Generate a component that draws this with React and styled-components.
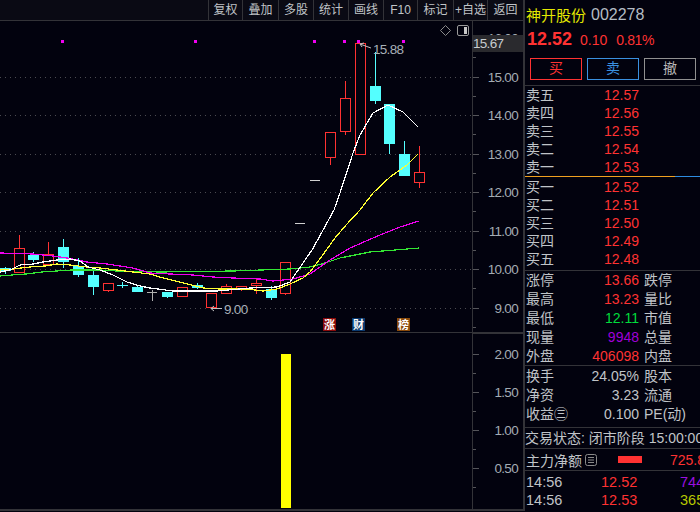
import React from "react";
import styled, { createGlobalStyle } from "styled-components";

const RED = "#ff3232";
const CYAN = "#54ffff";
const LINE = "#333338";
const BG = "#02020e";

const tools = ["复权", "叠加", "多股", "统计", "画线", "F10", "标记", "+自选", "返回"];
const toolWidths = [34, 36, 35, 35, 35, 34, 36, 34, 36];

// x, bodyTop, bodyBottom, wickTop, wickBottom, up
const candles = [
  [5, 268, 271, 267, 274, false],
  [19, 248, 273, 235, 273, true],
  [33, 255, 260, 252, 262, false],
  [48, 254, 265, 242, 265, true],
  [63, 247, 262, 239, 268, false],
  [78, 266, 275, 258, 277, false],
  [93, 275, 287, 270, 295, false],
  [108, 283, 291, 283, 292, true],
  [137, 287, 292, 285, 292, false],
  [167, 292, 297, 292, 298, false],
  [182, 287, 297, 287, 297, true],
  [197, 285, 288, 283, 289, false],
  [211, 293, 308, 293, 308, true],
  [226, 286, 294, 284, 294, true],
  [241, 286, 290, 286, 291, true],
  [256, 283, 286, 278, 294, true],
  [271, 289, 298, 286, 300, false],
  [285, 262, 294, 262, 295, true],
  [330, 132, 158, 132, 165, true],
  [345, 98, 132, 81, 135, true],
  [360, 43, 155, 43, 155, true],
  [375, 86, 101, 52, 104, false],
  [389, 104, 144, 104, 154, false],
  [404, 154, 176, 141, 176, false],
  [419, 172, 183, 146, 188, true],
];

const crosses = [
  [122, 285, 117, 128, 282, 288, CYAN],
  [152, 292, 147, 157, 290, 301, "#b0b0b0"],
  [300, 223, 295, 305, 223, 223, "#d0d0d0"],
  [315, 180, 310, 320, 180, 180, "#d0d0d0"],
];

const maLines = [
  {
    color: "#33e633",
    points:
      "0,276 12,275 26,274 42,272 57,271 72,270 100,270 117,271 160,272 233,271 290,269 310,267 325,263 340,258 370,252 395,250 419,248",
  },
  {
    color: "#f000f0",
    points:
      "0,253 33,254 53,256 67,258 87,262 107,264 133,268 150,273 170,274 193,275 213,277 233,278 260,279 273,281 293,279 310,274 330,260 350,248 380,235 400,227 419,221",
  },
  {
    color: "#ffff33",
    points:
      "0,270 13,269 30,267 45,266 57,264 70,265 87,267 100,268 117,270 133,272 150,274 163,278 183,283 203,288 220,289 247,289 263,291 277,289 290,284 303,278 310,272 322,256 335,238 347,224 360,210 373,193 390,177 407,165 418,154",
  },
  {
    color: "#ffffff",
    points:
      "0,272 10,270 20,265 33,264 43,262 57,260 70,259 80,261 88,267 100,270 113,275 127,282 140,286 150,288 173,291 193,291 217,291 250,288 277,287 290,282 305,260 312,250 322,232 334,210 340,193 353,153 360,135 373,113 388,105 403,112 418,127",
  },
];

const priceMarks = [62, 195, 314, 344, 358, 403];
const gridYs = [77, 115, 154, 192, 231, 269, 308];
const priceTicks = [
  ["16.00", 38],
  ["15.00", 77],
  ["14.00", 115],
  ["13.00", 154],
  ["12.00", 192],
  ["11.00", 231],
  ["10.00", 269],
  ["9.00", 308],
];
const volTicks = [
  ["2.00", 354],
  ["1.50", 392],
  ["1.00", 430],
  ["0.50", 468],
];

const asks = [
  ["卖五", "12.57"],
  ["卖四", "12.56"],
  ["卖三", "12.55"],
  ["卖二", "12.54"],
  ["卖一", "12.53"],
];
const bids = [
  ["买一", "12.52"],
  ["买二", "12.51"],
  ["买三", "12.50"],
  ["买四", "12.49"],
  ["买五", "12.48"],
];
const stats = [
  ["涨停", "13.66", RED, "跌停"],
  ["最高", "13.23", RED, "量比"],
  ["最低", "12.11", "#00dc3c", "市值"],
  ["现量", "9948", "#a000d8", "总量"],
  ["外盘", "406098", RED, "内盘"],
];
const shares = [
  ["换手", "24.05%", "#c0c4c8", "股本"],
  ["净资", "3.23", "#c0c4c8", "流通"],
  ["收益㊂", "0.100", "#c0c4c8", "PE(动)"],
];
const ticks = [
  ["14:56", "12.52", "744", "#9a10e0"],
  ["14:56", "12.53", "365", "#b8c800"],
];

const GlobalStyle = createGlobalStyle`
  html, body {
    margin: 0;
    background: ${BG};
    overflow: hidden;
  }
  * { box-sizing: border-box; }
`;

const Page = styled.div`
  display: flex;
  width: 700px;
  height: 512px;
  overflow: hidden;
  background: ${BG};
  font-family: "Liberation Sans", "Noto Sans CJK SC", sans-serif;
  font-size: 14px;
  color: #c0c4c8;
`;
const ChartColumn = styled.div`
  display: flex;
  flex-direction: column;
  width: 525px;
  height: 511px;
  flex: none;
  border-right: 2px solid ${LINE};
`;
const Toolbar = styled.div`
  display: flex;
  justify-content: flex-end;
  height: 21px;
  border-bottom: 1px solid ${LINE};
  background: #0a0a14;
`;
const ToolButton = styled.div`
  width: ${(p) => p.$w}px;
  height: 20px;
  line-height: 20px;
  text-align: center;
  white-space: nowrap;
  font-size: 12px;
  color: #c0c4c8;
  border-left: 1px solid ${LINE};
`;
const Pane = styled.div`
  display: flex;
  height: ${(p) => p.$h}px;
  border-bottom: ${(p) => p.$rule}px solid ${LINE};
`;
const PlotBox = styled.div`
  position: relative;
  width: 472px;
  height: 100%;
  flex: none;
`;
const Plot = styled.svg`
  display: block;
  width: 472px;
  height: 100%;
`;
const AxisWrap = styled.div`
  position: relative;
  width: 51px;
  flex: none;
  border-left: 1px solid ${LINE};
  border-top: ${(p) => (p.$boxed ? `1px solid ${LINE}` : "none")};
`;
const AxisSvg = styled.svg`
  display: block;
  width: 50px;
  height: 100%;
`;
const AxisLabel = styled.text`
  font-family: "Liberation Sans", sans-serif;
  font-size: 13.5px;
  letter-spacing: -0.7px;
  fill: #a4acb4;
  text-anchor: end;
`;
const LastPrice = styled.div`
  position: absolute;
  left: 0;
  top: 14px;
  width: 50px;
  height: 17px;
  line-height: 17px;
  background: #2a2a2e;
  color: #c8ccd0;
  font-size: 13.5px;
  letter-spacing: -0.7px;
`;
const PeakLabel = styled.text`
  font-family: "Liberation Sans", sans-serif;
  font-size: 13.5px;
  letter-spacing: -0.7px;
  fill: #a8b0b8;
`;
const TagBox = styled.g`
  font-family: "Noto Sans CJK SC", sans-serif;
  font-size: 11px;
  font-weight: 700;
  fill: #ffffff;
  text-anchor: middle;
`;
const ToggleIcons = styled.div`
  position: absolute;
  top: 4px;
  right: 3px;
  display: flex;
  align-items: center;
  gap: 6px;
`;

const Side = styled.div`
  flex: 1;
  min-width: 0;
  display: flex;
  flex-direction: column;
  overflow: hidden;
`;
const Header = styled.div`
  height: 86px;
  padding: 4px 1px 0;
  border-bottom: 1px solid ${LINE};
`;
const NameRow = styled.div`
  display: flex;
  align-items: center;
  gap: 5px;
  height: 21px;
`;
const StockName = styled.span`
  font-size: 15px;
  color: #e4e800;
`;
const StockCode = styled.span`
  font-size: 16px;
  color: #b4bcc4;
`;
const PriceRow = styled.div`
  display: flex;
  align-items: center;
  height: 25px;
  margin-top: 2px;
  padding-left: 1px;
  color: ${RED};
`;
const Price = styled.span`
  font-size: 18px;
  font-weight: 700;
  margin-right: 8px;
`;
const Change = styled.span`
  font-size: 14px;
  margin-right: 9px;
  letter-spacing: ${(p) => (p.$tight ? "-0.4px" : "0")};
`;
const ActionRow = styled.div`
  display: flex;
  gap: 5px;
  margin-top: 6px;
  padding-left: 4px;
`;
const Action = styled.div`
  width: 52px;
  height: 22px;
  line-height: 19px;
  text-align: center;
  font-size: 14px;
  border: 1px solid ${(p) => p.$c};
  color: ${(p) => p.$t || p.$c};
`;
const Book = styled.div`
  padding-top: ${(p) => p.$top || 0}px;
  height: ${(p) => p.$h}px;
  border-bottom: ${(p) => (p.$plain ? "none" : `1px solid ${LINE}`)};
`;
const Spread = styled.div`
  display: flex;
  height: 1px;
  flex: none;
  background: #2e8ce0;
`;
const SpreadBid = styled.div`
  width: 150px;
  background: #f0a020;
`;
const QuoteRow = styled.div`
  display: grid;
  grid-template-columns: 113px 1fr;
  column-gap: 5px;
  height: ${(p) => p.$h}px;
  line-height: ${(p) => p.$h}px;
  padding-left: 1px;
  white-space: nowrap;
`;
const QuoteCell = styled.div`
  display: flex;
  justify-content: space-between;
`;
const QuoteValue = styled.span`
  color: ${(p) => p.$c || RED};
`;
const StatusRow = styled.div`
  height: 21px;
  line-height: 20px;
  font-size: 14px;
  white-space: nowrap;
  border-bottom: 1px solid ${LINE};
`;
const FlowRow = styled.div`
  display: flex;
  align-items: center;
  height: 22px;
  padding-left: 1px;
  white-space: nowrap;
  border-bottom: 1px solid ${LINE};
`;
const ListIcon = styled.svg`
  width: 12px;
  height: 12px;
  margin-left: 3px;
  flex: none;
`;
const FlowBar = styled.div`
  width: 24px;
  height: 7px;
  margin-left: 21px;
  background: ${RED};
  flex: none;
`;
const FlowValue = styled.span`
  margin-left: 28px;
  color: ${RED};
`;
const TickList = styled.div`
  padding-top: 2px;
`;
const TickRow = styled.div`
  display: flex;
  height: 18px;
  line-height: 18px;
  padding-left: 1px;
  font-size: 14.5px;
  white-space: nowrap;
`;
const TickTime = styled.span`
  width: 75px;
  flex: none;
`;
const TickPrice = styled.span`
  width: 79px;
  flex: none;
  color: ${RED};
`;
const TickVol = styled.span`
  color: ${(p) => p.$c};
`;

const Candle = ({ c }) => {
  const [x, top, bottom, wickTop, wickBottom, up] = c;
  const color = up ? RED : CYAN;
  return (
    <g shapeRendering="crispEdges">
      <rect x={x} y={wickTop} width={1} height={wickBottom - wickTop} fill={color} />
      <rect x={x - 5} y={top} width={11} height={bottom - top} fill={color} />
      {up && <rect x={x - 4} y={top + 1} width={9} height={bottom - top - 2} fill={BG} />}
    </g>
  );
};

const Tag = ({ x, bg, children }) => (
  <TagBox>
    <rect x={x} y={318} width={13} height={13} fill={bg} />
    <text x={x + 6.5} y={329}>
      {children}
    </text>
  </TagBox>
);

const PriceChart = () => (
  <Plot viewBox="0 21 472 311">
    {gridYs.map((y) => (
      <line key={y} x1={0} x2={472} y1={y + 0.5} y2={y + 0.5} stroke="#4a4a50" strokeDasharray="1 4" />
    ))}
    {candles.map((c) => (
      <Candle key={c[0]} c={c} />
    ))}
    {crosses.map(([x, y, x1, x2, y1, y2, color]) => (
      <g key={x} fill={color} shapeRendering="crispEdges">
        <rect x={x1} y={y} width={x2 - x1} height={1} />
        {y1 !== y2 && <rect x={x} y={y1} width={1} height={y2 - y1} />}
      </g>
    ))}
    {maLines.map((l) => (
      <polyline
        key={l.color}
        points={l.points}
        fill="none"
        stroke={l.color}
        strokeWidth={1.2}
        shapeRendering="crispEdges"
      />
    ))}
    {priceMarks.map((x) => (
      <rect key={x} x={x - 1} y={40} width={3} height={3} fill="#f000f0" />
    ))}
    <g stroke="#c0c0c0" fill="none">
      <path d="M371 48 L360 44 M360 44 L364 43 M360 44 L362 47" />
      <path d="M222 308.5 L211 308.5 M211 308.5 L214 306 M211 308.5 L214 311" />
    </g>
    <PeakLabel x={373} y={54}>
      15.88
    </PeakLabel>
    <PeakLabel x={224} y={314}>
      9.00
    </PeakLabel>
    <Tag x={323} bg="#8a0a0a">
      涨
    </Tag>
    <Tag x={352} bg="#0a3a70">
      财
    </Tag>
    <Tag x={397} bg="#8a4a0a">
      榜
    </Tag>
  </Plot>
);

const AxisTicks = ({ items }) =>
  items.map(([label, y]) => (
    <g key={label}>
      <rect x={473} y={y} width={6} height={1} fill="#55555a" />
      <rect x={473} y={y + 19} width={3} height={1} fill="#55555a" />
      <AxisLabel x={518} y={y + 5}>
        {label}
      </AxisLabel>
    </g>
  ));

const App = () => (
  <Page>
    <GlobalStyle />
    <ChartColumn>
      <Toolbar>
        {tools.map((t, i) => (
          <ToolButton key={t} $w={toolWidths[i]}>
            {t}
          </ToolButton>
        ))}
      </Toolbar>
      <Pane $h={312} $rule={1}>
        <PlotBox>
          <PriceChart />
          <ToggleIcons>
            <svg width="11" height="11" viewBox="0 0 11 11">
              <path d="M5.5 .5 L10.5 5.5 L5.5 10.5 L.5 5.5 Z" fill="none" stroke="#8a8a8a" />
            </svg>
            <svg width="12" height="11" viewBox="0 0 12 11">
              <rect x=".5" y=".5" width="11" height="10" rx="1.5" fill="none" stroke="#9a9a9a" />
              <rect x="7" y="2" width="3" height="7" fill="#c8c8c8" />
            </svg>
          </ToggleIcons>
        </PlotBox>
        <AxisWrap>
          <AxisSvg viewBox="473 21 50 311">
            <AxisTicks items={priceTicks} />
          </AxisSvg>
          <LastPrice>15.67</LastPrice>
        </AxisWrap>
      </Pane>
      <Pane $h={178} $rule={2}>
        <PlotBox>
          <Plot viewBox="0 333 472 176">
            <rect x={281} y={354} width={10} height={154} fill="#ffff00" />
          </Plot>
        </PlotBox>
        <AxisWrap $boxed>
          <AxisSvg viewBox="473 334 50 175">
            <AxisTicks items={volTicks} />
          </AxisSvg>
        </AxisWrap>
      </Pane>
    </ChartColumn>
    <Side>
      <Header>
        <NameRow>
          <StockName>神开股份</StockName>
          <StockCode>002278</StockCode>
        </NameRow>
        <PriceRow>
          <Price>12.52</Price>
          <Change>0.10</Change>
          <Change $tight>0.81%</Change>
        </PriceRow>
        <ActionRow>
          <Action $c={RED}>买</Action>
          <Action $c="#3a90e0">卖</Action>
          <Action $c="#909090" $t="#b8b8b8">
            撤
          </Action>
        </ActionRow>
      </Header>
      <Book $h={90} $plain>
        {asks.map(([label, value]) => (
          <QuoteRow key={label} $h={18}>
            <QuoteCell>
              <span>{label}</span>
              <QuoteValue>{value}</QuoteValue>
            </QuoteCell>
          </QuoteRow>
        ))}
      </Book>
      <Spread>
        <SpreadBid />
      </Spread>
      <Book $h={94} $top={1}>
        {bids.map(([label, value]) => (
          <QuoteRow key={label} $h={18}>
            <QuoteCell>
              <span>{label}</span>
              <QuoteValue>{value}</QuoteValue>
            </QuoteCell>
          </QuoteRow>
        ))}
      </Book>
      <Book $h={95}>
        {stats.map(([label, value, color, extra]) => (
          <QuoteRow key={label} $h={19}>
            <QuoteCell>
              <span>{label}</span>
              <QuoteValue $c={color}>{value}</QuoteValue>
            </QuoteCell>
            <span>{extra}</span>
          </QuoteRow>
        ))}
      </Book>
      <Book $h={62} $top={1}>
        {shares.map(([label, value, color, extra]) => (
          <QuoteRow key={label} $h={19}>
            <QuoteCell>
              <span>{label}</span>
              <QuoteValue $c={color}>{value}</QuoteValue>
            </QuoteCell>
            <span>{extra}</span>
          </QuoteRow>
        ))}
      </Book>
      <StatusRow>交易状态: 闭市阶段 15:00:00</StatusRow>
      <FlowRow>
        主力净额
        <ListIcon viewBox="0 0 12 12">
          <rect x=".5" y=".5" width="11" height="11" rx="2" fill="none" stroke="#8a8a8a" />
          <path d="M3 3.5 H9 M3 6 H9 M3 8.5 H9" stroke="#8a8a8a" />
        </ListIcon>
        <FlowBar />
        <FlowValue>725.8</FlowValue>
      </FlowRow>
      <TickList>
        {ticks.map(([time, price, vol, color]) => (
          <TickRow key={price}>
            <TickTime>{time}</TickTime>
            <TickPrice>{price}</TickPrice>
            <TickVol $c={color}>{vol}</TickVol>
          </TickRow>
        ))}
      </TickList>
    </Side>
  </Page>
);

export default App;
